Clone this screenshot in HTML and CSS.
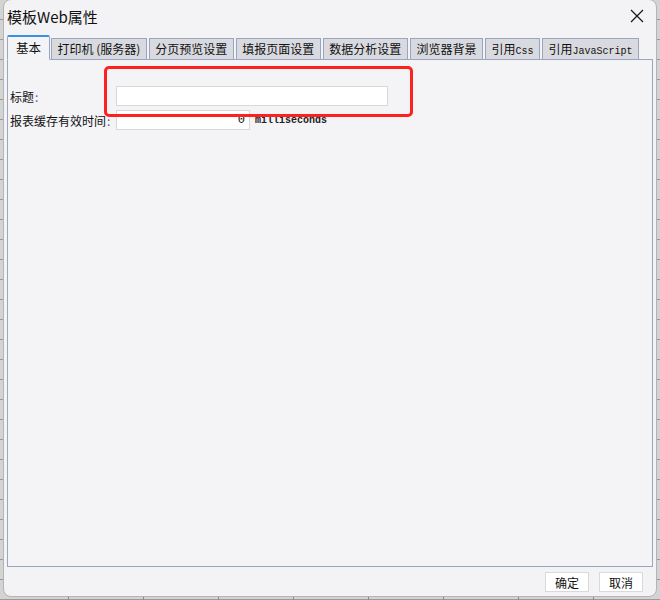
FILE: index.html
```html
<!DOCTYPE html>
<html lang="zh-CN">
<head>
    <meta charset="UTF-8">
    <title>模板Web属性</title>
    <link rel="stylesheet" href="styles.css">
</head>
<body>
    <div class="dialog">
        <div class="titlebar">
            <span class="title">模板Web属性</span>
            <span class="close">
                <svg width="14" height="14" viewBox="0 0 14 14">
                    <path d="M1 1 L13 13 M13 1 L1 13" stroke="#1a1a1a" stroke-width="1.3" fill="none"/>
                </svg>
            </span>
        </div>

        <div class="tabs">
            <div class="tab active">基本</div>
            <div class="tab">打印机 (服务器)</div>
            <div class="tab">分页预览设置</div>
            <div class="tab">填报页面设置</div>
            <div class="tab">数据分析设置</div>
            <div class="tab">浏览器背景</div>
            <div class="tab">引用<span class="mono">Css</span></div>
            <div class="tab">引用<span class="mono">JavaScript</span></div>
        </div>

        <div class="panel">
            <div class="form">
                <label class="label">标题<span class="colon">:</span></label>
                <div class="row">
                    <div class="field wide"></div>
                </div>

                <label class="label">报表缓存有效时间<span class="colon">:</span></label>
                <div class="row">
                    <div class="field short">0</div>
                    <span class="unit">milliseconds</span>
                </div>
            </div>
        </div>

        <div class="footer">
            <button class="btn">确定</button>
            <button class="btn">取消</button>
        </div>

        <!-- annotation -->
        <div class="highlight"></div>
    </div>
</body>
</html>
```

FILE: styles.css
```css
html, body {
    margin: 0;
    padding: 0;
}

body {
    width: 660px;
    height: 600px;
    overflow: hidden;
    background-color: #d3d3d3;
    background-image:
        repeating-linear-gradient(to right, transparent 0, transparent 68px, #8a8a8a 68px, #8a8a8a 69px, transparent 69px, transparent 75px),
        repeating-linear-gradient(to bottom, transparent 0, transparent 19px, #9a9a9a 19px, #9a9a9a 20px);
    font-family: "Noto Sans CJK SC", "Noto Sans", sans-serif;
    color: #111;
}

.dialog {
    position: relative;
    box-sizing: border-box;
    margin-left: 3px;
    width: 654px;
    height: 598px;
    margin-top: -1px;
    background: #f3f3f5;
    border: 1px solid #b4b4b4;
    border-radius: 8px;
    display: flex;
    flex-direction: column;
}

.titlebar {
    height: 35px;
    display: flex;
    align-items: center;
    justify-content: space-between;
    padding: 0 12px 0 3px;
}

.title {
    font-size: 15px;
    margin-top: -3px;
}

.close {
    display: flex;
    margin-top: -4px;
}

.tabs {
    display: flex;
    align-items: flex-end;
    gap: 2px;
    height: 25px;
    padding-left: 3px;
    margin-bottom: -1px;
    position: relative;
    z-index: 1;
}

.tab {
    box-sizing: border-box;
    height: 22px;
    padding: 0 5.5px;
    font-size: 12px;
    line-height: 20px;
    background: #d9dae0;
    border: 1px solid #9aa5bf;
    white-space: nowrap;
}

.tab.active {
    height: 25px;
    padding: 0 8px;
    margin-right: -1px;
    font-size: 12.5px;
    line-height: 22px;
    background: #f4f4f7;
    border-top: 2px solid #3d8fe0;
    border-bottom-color: #f4f4f7;
    border-radius: 2px 2px 0 0;
}

.mono {
    font-family: "Liberation Mono", monospace;
    font-size: 10px;
}

.panel {
    flex: 1;
    margin: 0 3px 0 3px;
    background: #f4f4f7;
    border: 1px solid #9aa5bf;
}

.form {
    display: grid;
    grid-template-columns: 106px 1fr;
    align-items: center;
    row-gap: 4px;
    padding: 26px 0 0 2px;
}

.row {
    display: flex;
    align-items: center;
    gap: 5px;
}

.label {
    font-size: 12px;
    white-space: nowrap;
}

.colon {
    color: #6a4c7c;
    margin-left: 1px;
}

.field {
    box-sizing: border-box;
    height: 20px;
    background: #fff;
    border: 1px solid #d8d8d8;
}

.field.wide {
    width: 272px;
}

.field.short {
    width: 134px;
    text-align: right;
    padding-right: 4px;
    font-family: "Liberation Mono", monospace;
    font-size: 12px;
    line-height: 18px;
}

.unit {
    font-family: "Liberation Mono", monospace;
    font-size: 10px;
    font-weight: bold;
    color: #222;
}

.footer {
    height: 29px;
    display: flex;
    justify-content: flex-end;
    align-items: flex-start;
    gap: 10px;
    padding: 5px 13px 0 0;
    box-sizing: border-box;
}

.btn {
    width: 44px;
    height: 20px;
    padding: 0;
    font-family: "Noto Sans CJK SC", sans-serif;
    font-size: 12px;
    color: #111;
    background: #fff;
    border: 1px solid #d9d9d9;
}

.highlight {
    position: absolute;
    left: 100px;
    top: 66px;
    width: 303px;
    height: 45px;
    border: 3px solid #ff2020;
    border-radius: 5px;
}
```
